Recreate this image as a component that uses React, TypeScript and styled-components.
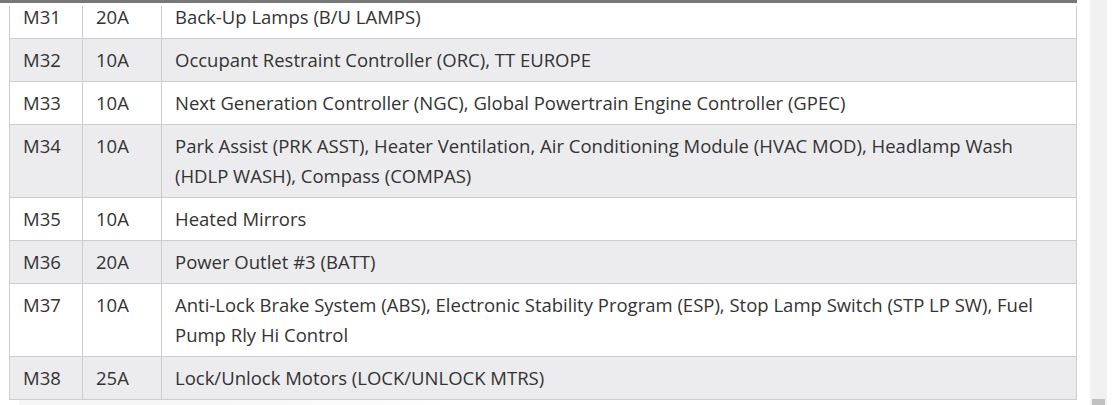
import React from "react";
import styled, { createGlobalStyle } from "styled-components";

const GlobalStyle = createGlobalStyle`
  html, body { margin: 0; padding: 0; background: #ffffff; overflow: hidden; }
  body { font-family: "Open Sans", "Noto Sans", Arial, sans-serif; }
`;

const Page = styled.div`
  display: flex;
  height: 405px;
  width: 1119px;
`;

const Main = styled.div`
  width: 1077px;
  display: flex;
  flex-direction: column;
`;

const TopBar = styled.div`
  height: 3px;
  background: #787878;
  flex-shrink: 0;
`;

const Viewport = styled.div`
  margin-top: 3px;
  flex: 1;
  overflow: hidden;
  padding-left: 9px;
`;

const Scrolled = styled.div`
  margin-top: -11px;
`;

const Table = styled.table`
  width: 1068px;
  border-collapse: collapse;
  table-layout: fixed;
  border: 1px solid #cdcdcd;
`;

const Row = styled.tr<{ $alt: boolean }>`
  background: ${(p) => (p.$alt ? "#ececee" : "#ffffff")};
`;

const Cell = styled.td`
  border: 1px solid #cdcdcd;
  padding: 6px 13px;
  font-size: 18.5px;
  line-height: 30px;
  color: #333333;
  vertical-align: top;
`;

const Shade = styled.div`
  height: 6px;
  margin-left: 10px;
  width: 440px;
  background: linear-gradient(to right, #f5f5f5, #f8f8f8 60%, rgba(255, 255, 255, 0));
`;

const Gutter = styled.div`
  width: 13px;
`;

const Track = styled.div`
  width: 17px;
  height: 405px;
  background: #f1f1f1;
  display: flex;
  flex-direction: column;
  justify-content: flex-end;
  align-items: flex-start;
`;

const Thumb = styled.div`
  width: 13px;
  margin-left: 2px;
  height: 6px;
  background: #c1c1c1;
`;

const rows: [string, string, string][] = [
  ["M31", "20A", "Back-Up Lamps (B/U LAMPS)"],
  ["M32", "10A", "Occupant Restraint Controller (ORC), TT EUROPE"],
  ["M33", "10A", "Next Generation Controller (NGC), Global Powertrain Engine Controller (GPEC)"],
  [
    "M34",
    "10A",
    "Park Assist (PRK ASST), Heater Ventilation, Air Conditioning Module (HVAC MOD), Headlamp Wash (HDLP WASH), Compass (COMPAS)",
  ],
  ["M35", "10A", "Heated Mirrors"],
  ["M36", "20A", "Power Outlet #3 (BATT)"],
  [
    "M37",
    "10A",
    "Anti-Lock Brake System (ABS), Electronic Stability Program (ESP), Stop Lamp Switch (STP LP SW), Fuel Pump Rly Hi Control",
  ],
  ["M38", "25A", "Lock/Unlock Motors (LOCK/UNLOCK MTRS)"],
];

export default function App() {
  return (
    <>
      <GlobalStyle />
      <Page>
        <Main>
          <TopBar />
          <Viewport>
            <Scrolled>
              <Table>
                <colgroup>
                  <col style={{ width: 73 }} />
                  <col style={{ width: 79 }} />
                  <col />
                </colgroup>
                <tbody>
                  {rows.map((r, i) => (
                    <Row key={r[0]} $alt={i % 2 === 1}>
                      <Cell>{r[0]}</Cell>
                      <Cell>{r[1]}</Cell>
                      <Cell>{r[2]}</Cell>
                    </Row>
                  ))}
                </tbody>
              </Table>
              <Shade />
            </Scrolled>
          </Viewport>
        </Main>
        <Gutter />
        <Track>
          <Thumb />
        </Track>
      </Page>
    </>
  );
}
